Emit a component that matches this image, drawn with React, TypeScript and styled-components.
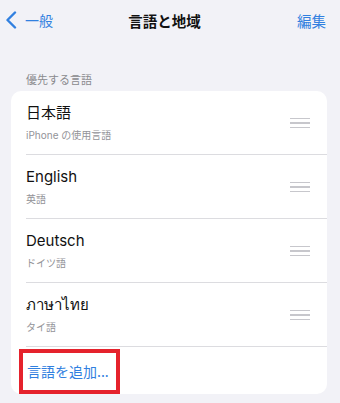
import React from 'react';
import styled, { createGlobalStyle } from 'styled-components';

const GlobalStyle = createGlobalStyle`
  html, body {
    margin: 0;
    padding: 0;
    background: #f2f2f7;
  }
  body {
    font-family: Inter, "Noto Sans", "Noto Sans CJK JP", sans-serif;
    -webkit-font-smoothing: antialiased;
  }
`;

const Page = styled.div`
  width: 340px;
  height: 403px;
  background: #f2f2f7;
  overflow: hidden;
`;

const NavBar = styled.div`
  height: 40px;
  display: grid;
  grid-template-columns: 1fr auto 1fr;
  align-items: center;
  padding: 0 14px 0 5px;
`;

const BackButton = styled.div`
  display: flex;
  align-items: center;
  gap: 8px;
  color: #3180e0;
  font-size: 14px;
  font-family: "Noto Sans CJK JP", sans-serif;
`;

const NavTitle = styled.div`
  font-size: 14.5px;
  font-weight: 700;
  color: #111;
  font-family: "Noto Sans CJK JP", sans-serif;
  margin-left: -2px;
`;

const EditButton = styled.div`
  justify-self: end;
  color: #3180e0;
  font-size: 14.5px;
  font-family: "Noto Sans CJK JP", sans-serif;
`;

const SectionHeader = styled.div`
  margin: 32px 0 5px;
  padding: 0 26px;
  font-size: 11px;
  line-height: 14px;
  color: #8a8a8e;
  font-family: "Noto Sans CJK JP", sans-serif;
`;

const Card = styled.div`
  margin: 0 13px 0 11px;
  background: #fff;
  border-radius: 10px;
`;

const Row = styled.div`
  padding-left: 15px;
`;

const RowInner = styled.div`
  height: 63px;
  border-bottom: 1px solid #dcdce0;
  display: flex;
  align-items: center;
  justify-content: space-between;
  padding-right: 17px;
`;

const TextBlock = styled.div`
  display: flex;
  flex-direction: column;
  gap: 7px;
`;

const Title = styled.div`
  font-size: 15px;
  line-height: 18px;
  color: #111;
`;

const Subtitle = styled.div`
  font-size: 10px;
  line-height: 12px;
  color: #939398;
`;

const Handle = styled.div`
  width: 20px;
  display: flex;
  flex-direction: column;
  gap: 3px;
  padding-top: 1px;

  span {
    display: block;
    height: 1.5px;
    background: #c7c7cc;
  }
`;

const AddRow = styled.div`
  position: relative;
  height: 47px;
  display: flex;
  align-items: center;
  padding-left: 16px;
  color: #3180e0;
  font-size: 14px;
  font-family: "Noto Sans CJK JP", sans-serif;
`;

const Highlight = styled.div`
  position: absolute;
  left: 8px;
  top: 2px;
  width: 101px;
  height: 45px;
  border: 4px solid #e5222c;
  box-sizing: border-box;
`;

const languages = [
  { name: '日本語', note: 'iPhone の使用言語' },
  { name: 'English', note: '英語' },
  { name: 'Deutsch', note: 'ドイツ語' },
  { name: 'ภาษาไทย', note: 'タイ語' },
];

const App: React.FC = () => {
  return (
    <Page>
      <GlobalStyle />
      <NavBar>
        <BackButton>
          <svg width="12" height="18" viewBox="0 0 12 18" fill="none">
            <path d="M10 1.5L2.5 9L10 16.5" stroke="#3180e0" strokeWidth="2.4" strokeLinecap="round" strokeLinejoin="round" />
          </svg>
          一般
        </BackButton>
        <NavTitle>言語と地域</NavTitle>
        <EditButton>編集</EditButton>
      </NavBar>

      <SectionHeader>優先する言語</SectionHeader>

      <Card>
        {languages.map((lang) => (
          <Row key={lang.name}>
            <RowInner>
              <TextBlock>
                <Title>{lang.name}</Title>
                <Subtitle>{lang.note}</Subtitle>
              </TextBlock>
              <Handle>
                <span />
                <span />
                <span />
              </Handle>
            </RowInner>
          </Row>
        ))}
        <AddRow>
          言語を追加...
          <Highlight />
        </AddRow>
      </Card>
    </Page>
  );
};

export default App;
